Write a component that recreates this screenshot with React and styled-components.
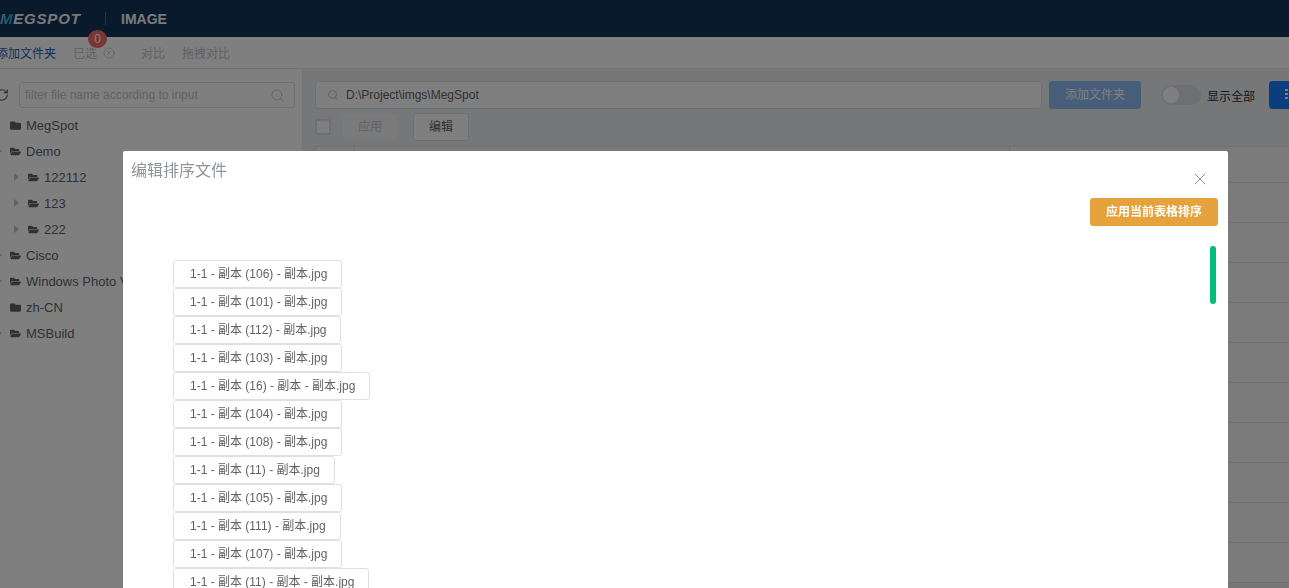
import React from 'react';
import styled, { createGlobalStyle } from 'styled-components';
import { Search, RotateCw, CircleX, X } from 'lucide-react';
import { FaFolder, FaFolderOpen } from 'react-icons/fa';

const GlobalStyle = createGlobalStyle`
  html, body { margin: 0; padding: 0; height: 100%; overflow: hidden; }
  body { font-family: "Liberation Sans", "Noto Sans CJK SC", sans-serif; background: #fff; }
  * { box-sizing: border-box; }
`;

const Page = styled.div`
  width: 1289px;
  height: 588px;
  display: flex;
  flex-direction: column;
  overflow: hidden;
`;

const Header = styled.header`
  height: 37px;
  flex: none;
  background: #14345a;
  display: flex;
  align-items: center;
  color: #fff;
`;

const Logo = styled.div`
  display: flex;
  align-items: center;
  font: italic 700 15px "Liberation Sans", sans-serif;
  letter-spacing: 0.8px;
  width: 105px;
  color: #f0f0f0;
`;

const LogoMark = styled.span`
  background: linear-gradient(90deg, #9fb4c8 0%, #38c6f0 60%, #2f8fe8 100%);
  -webkit-background-clip: text;
  background-clip: text;
  color: transparent;
`;

const HeaderDivider = styled.span`
  width: 1px;
  height: 13px;
  background: #4c6a8c;
  margin-right: 15px;
`;

const HeaderTitle = styled.span`
  font-size: 14px;
  font-weight: 700;
  color: #f4f4f4;
`;

const Toolbar = styled.div`
  height: 32px;
  flex: none;
  display: flex;
  align-items: center;
  font-size: 12px;
  color: #c0c4cc;
  border-bottom: 1px solid #e6e6e6;
`;

const AddLink = styled.span`
  color: #1565c0;
  margin-left: -4px;
  width: 77px;
`;

const Selected = styled.span`
  position: relative;
  display: flex;
  align-items: center;
  gap: 6px;
  width: 68px;
`;

const Badge = styled.span`
  position: absolute;
  left: 15px;
  top: -14px;
  min-width: 19px;
  height: 18px;
  border-radius: 9px;
  background: #f56c6c;
  color: #fff;
  font-size: 12px;
  line-height: 18px;
  text-align: center;
`;

const ToolItem = styled.span`
  margin-right: 17px;
`;

const Main = styled.div`
  flex: 1;
  display: flex;
  min-height: 0;
`;

const Sidebar = styled.aside`
  width: 302px;
  flex: none;
  background: #fff;
  padding-top: 13px;
  color: #606266;
`;

const FilterRow = styled.div`
  display: flex;
  align-items: center;
  gap: 10px;
  margin-left: -5px;
  padding-right: 7px;
  color: #606266;
`;

const FilterBox = styled.div`
  flex: 1;
  height: 26px;
  border: 1px solid #dcdfe6;
  border-radius: 3px;
  display: flex;
  align-items: center;
  justify-content: space-between;
  padding: 0 9px 0 5px;
  font-size: 12px;
  color: #c0c4cc;
`;

const Tree = styled.div`
  margin-top: 4px;
`;

const TreeRow = styled.div`
  height: 26px;
  display: flex;
  align-items: center;
  gap: 5px;
  padding-left: ${(p) => (p.$nested ? 14 : p.$leaf ? 10 : 0)}px;
  font-size: 13px;
  white-space: nowrap;
  overflow: hidden;
`;

const Caret = styled.span`
  flex: none;
  width: 0;
  height: 0;
  border-left: 5px solid #c0c4cc;
  border-top: 4px solid transparent;
  border-bottom: 4px solid transparent;
  margin-left: ${(p) => (p.$nested ? 0 : -3)}px;
  margin-right: ${(p) => (p.$nested ? 4 : 3)}px;
`;

const Content = styled.section`
  flex: 1;
  min-width: 0;
  background: #ebeef2;
  padding: 12px 0 0 12px;
  border-left: 1px solid #e8e8e8;
`;

const PathRow = styled.div`
  display: flex;
  align-items: center;
`;

const PathInput = styled.div`
  width: 727px;
  height: 28px;
  flex: none;
  background: #fff;
  border: 1px solid #dcdfe6;
  border-radius: 4px;
  display: flex;
  align-items: center;
  gap: 7px;
  padding-left: 11px;
  font-size: 12px;
  color: #606266;
`;

const PrimaryButton = styled.div`
  flex: none;
  height: 28px;
  width: 92px;
  margin-left: 7px;
  background: #8cbcf5;
  border-radius: 3px;
  color: #fff;
  font-size: 12px;
  line-height: 28px;
  text-align: center;
`;

const Toggle = styled.span`
  flex: none;
  width: 40px;
  height: 20px;
  border-radius: 10px;
  background: #dcdfe6;
  margin-left: 20px;
  padding: 2px;
  display: flex;
`;

const ToggleKnob = styled.span`
  width: 16px;
  height: 16px;
  border-radius: 50%;
  background: #fff;
`;

const ToggleLabel = styled.span`
  flex: none;
  margin-left: 6px;
  font-size: 12px;
  color: #303133;
`;

const MenuButton = styled.div`
  flex: none;
  width: 40px;
  height: 28px;
  margin-left: 14px;
  background: #167cff;
  border-radius: 4px;
  display: flex;
  flex-direction: column;
  gap: 2px;
  padding: 8px 0 0 16px;
`;

const MenuDot = styled.span`
  width: 3px;
  height: 2px;
  background: #fff;
`;

const ActionRow = styled.div`
  display: flex;
  align-items: center;
  margin-top: 4px;
  height: 28px;
`;

const Check = styled.span`
  width: 16px;
  height: 16px;
  background: #fff;
  border: 2px solid #dcdfe6;
  border-radius: 2px;
  margin-right: 11px;
`;

const SmallButton = styled.div`
  width: 56px;
  height: 28px;
  margin-right: 15px;
  border: 1px solid ${(p) => (p.$disabled ? '#ebeef5' : '#dcdfe6')};
  border-radius: 3px;
  background: ${(p) => (p.$disabled ? '#f5f5f5' : '#fff')};
  color: ${(p) => (p.$disabled ? '#c0c4cc' : '#606266')};
  font-size: 12px;
  line-height: 26px;
  text-align: center;
`;

const Table = styled.div`
  margin-top: 5px;
  border-top: 1px solid #e0e0e0;
`;

const TableRow = styled.div`
  height: ${(p) => (p.$head ? 36 : 40)}px;
  border-bottom: 1px solid #e0e0e0;
  background: #f6f6f6;
  display: flex;
`;

const HeadCell = styled.div`
  flex: ${(p) => (p.$width ? `0 0 ${p.$width}px` : '1')};
  border-left: 1px solid #e0e0e0;
`;

const Overlay = styled.div`
  position: fixed;
  inset: 0;
  background: rgba(0, 0, 0, 0.5);
`;

const Modal = styled.div`
  position: absolute;
  left: 123px;
  top: 151px;
  width: 1105px;
  height: 437px;
  background: #fff;
  border-radius: 2px 2px 0 0;
  overflow: hidden;
`;

const ModalHead = styled.div`
  height: 47px;
  padding: 6px 18px 0 8px;
  display: flex;
  justify-content: space-between;
  font-size: 16px;
  color: #909399;
`;

const CloseButton = styled.span`
  display: flex;
  color: #909399;
  padding-top: 12px;
`;

const ModalActions = styled.div`
  display: flex;
  justify-content: flex-end;
  padding-right: 10px;
`;

const ApplyButton = styled.div`
  width: 128px;
  height: 28px;
  background: #e6a23c;
  border-radius: 3px;
  color: #fff;
  font-size: 12px;
  font-weight: 700;
  line-height: 28px;
  text-align: center;
`;

const ScrollThumb = styled.span`
  position: absolute;
  left: 1087px;
  top: 95px;
  width: 6px;
  height: 58px;
  border-radius: 3px;
  background: #00bd78;
`;

const FileList = styled.div`
  margin-top: 34px;
  padding-left: 50px;
  display: flex;
  flex-direction: column;
  align-items: flex-start;
`;

const FileItem = styled.div`
  height: 28px;
  flex: none;
  padding: 0 14px 0 16px;
  border: 1px solid #dcdfe6;
  border-radius: 3px;
  background: #fff;
  color: #606266;
  font-size: 12px;
  line-height: 26px;
  white-space: nowrap;
`;

const folders = [
  { name: 'MegSpot', leaf: true },
  { name: 'Demo' },
  { name: '122112', nested: true },
  { name: '123', nested: true },
  { name: '222', nested: true },
  { name: 'Cisco' },
  { name: 'Windows Photo Viewer' },
  { name: 'zh-CN', leaf: true },
  { name: 'MSBuild' },
];

const files = [
  '1-1 - 副本 (106) - 副本.jpg',
  '1-1 - 副本 (101) - 副本.jpg',
  '1-1 - 副本 (112) - 副本.jpg',
  '1-1 - 副本 (103) - 副本.jpg',
  '1-1 - 副本 (16) - 副本 - 副本.jpg',
  '1-1 - 副本 (104) - 副本.jpg',
  '1-1 - 副本 (108) - 副本.jpg',
  '1-1 - 副本 (11) - 副本.jpg',
  '1-1 - 副本 (105) - 副本.jpg',
  '1-1 - 副本 (111) - 副本.jpg',
  '1-1 - 副本 (107) - 副本.jpg',
  '1-1 - 副本 (11) - 副本 - 副本.jpg',
];

export default function App() {
  return (
    <Page>
      <GlobalStyle />
      <Header>
        <Logo>
          <LogoMark>M</LogoMark>EGSPOT
        </Logo>
        <HeaderDivider />
        <HeaderTitle>IMAGE</HeaderTitle>
      </Header>
      <Toolbar>
        <AddLink>添加文件夹</AddLink>
        <Selected>
          已选
          <CircleX size={12} strokeWidth={1.5} />
          <Badge>0</Badge>
        </Selected>
        <ToolItem>对比</ToolItem>
        <ToolItem>拖拽对比</ToolItem>
      </Toolbar>
      <Main>
        <Sidebar>
          <FilterRow>
            <RotateCw size={14} />
            <FilterBox>
              filter file name according to input
              <Search size={15} strokeWidth={1.5} />
            </FilterBox>
          </FilterRow>
          <Tree>
            {folders.map((f) => (
              <TreeRow key={f.name} $nested={f.nested} $leaf={f.leaf}>
                {!f.leaf && <Caret $nested={f.nested} />}
                {f.leaf ? <FaFolder size={11} /> : <FaFolderOpen size={11} />}
                {f.name}
              </TreeRow>
            ))}
          </Tree>
        </Sidebar>
        <Content>
          <PathRow>
            <PathInput>
              <Search size={12} color="#c0c4cc" />
              D:\Project\imgs\MegSpot
            </PathInput>
            <PrimaryButton>添加文件夹</PrimaryButton>
            <Toggle>
              <ToggleKnob />
            </Toggle>
            <ToggleLabel>显示全部</ToggleLabel>
            <MenuButton>
              <MenuDot />
              <MenuDot />
              <MenuDot />
            </MenuButton>
          </PathRow>
          <ActionRow>
            <Check />
            <SmallButton $disabled>应用</SmallButton>
            <SmallButton>编辑</SmallButton>
          </ActionRow>
          <Table>
            <TableRow $head>
              <HeadCell $width={39} />
              <HeadCell $width={655} />
              <HeadCell />
            </TableRow>
            {Array.from({ length: 10 }, (_, i) => (
              <TableRow key={i} />
            ))}
          </Table>
        </Content>
      </Main>
      <Overlay />
      <Modal>
        <ModalHead>
          编辑排序文件
          <CloseButton>
            <X size={20} strokeWidth={1.2} />
          </CloseButton>
        </ModalHead>
        <ModalActions>
          <ApplyButton>应用当前表格排序</ApplyButton>
        </ModalActions>
        <ScrollThumb />
        <FileList>
          {files.map((name, i) => (
            <FileItem key={i}>{name}</FileItem>
          ))}
        </FileList>
      </Modal>
    </Page>
  );
}
